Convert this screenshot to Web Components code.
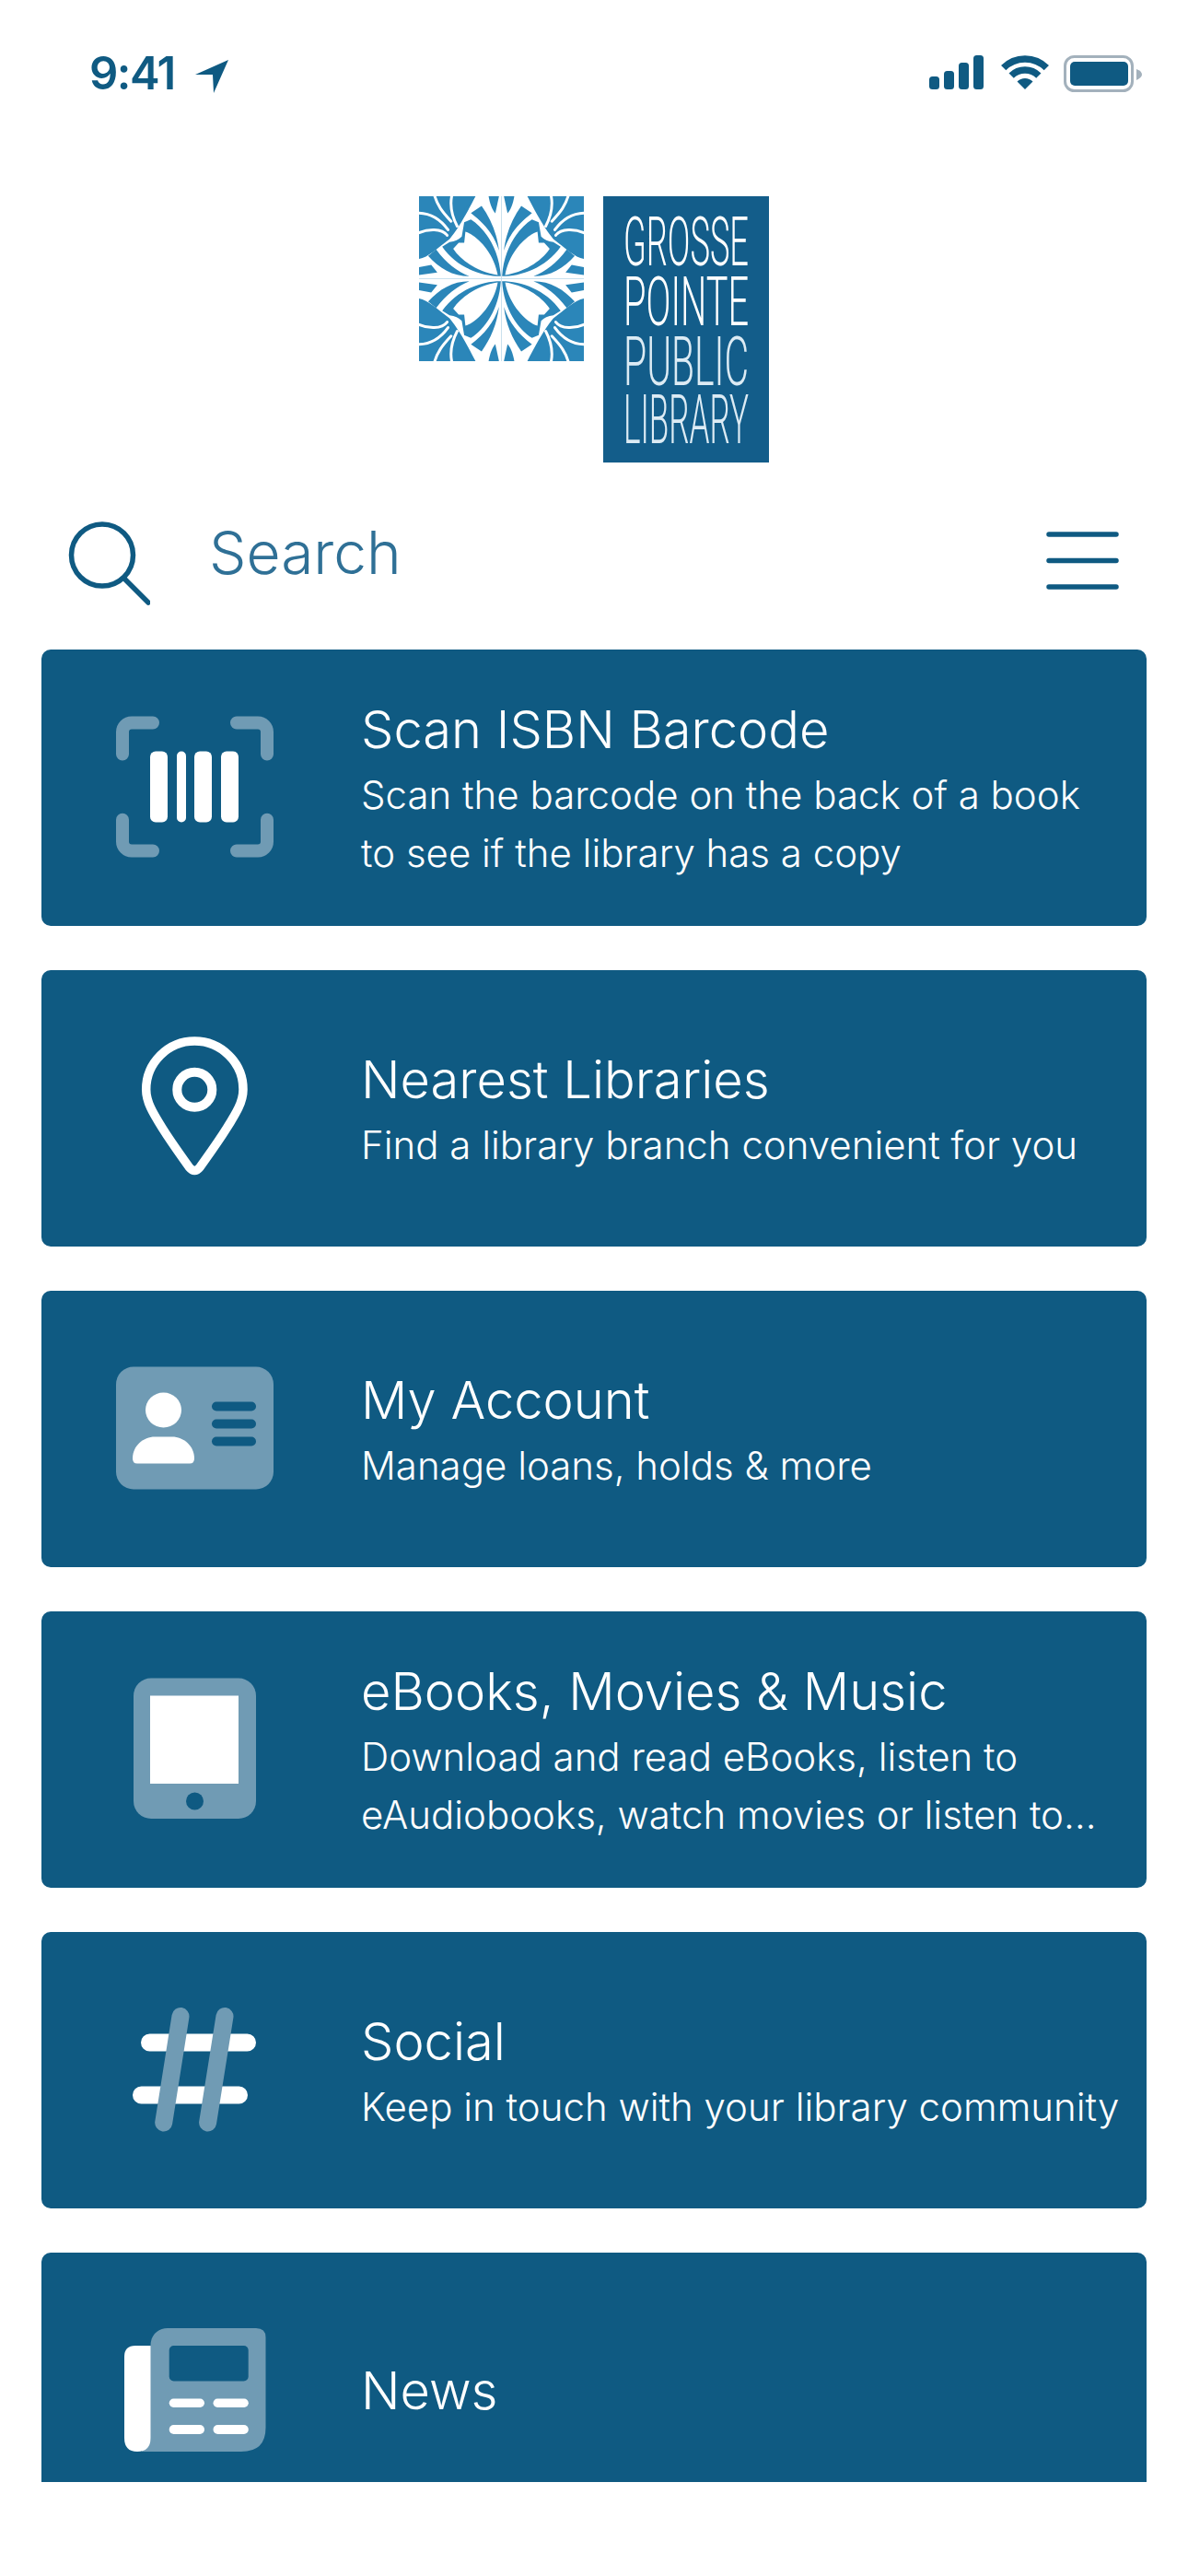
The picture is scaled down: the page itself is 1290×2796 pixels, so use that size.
<!doctype html>
<html><head><meta charset="utf-8"><style>
html,body{margin:0;padding:0;background:#fff}
body{width:1290px;height:2796px;overflow:hidden;font-family:"Inter","Liberation Sans",sans-serif}
app-page{display:block}
</style></head><body>
<app-page>
<status-bar></status-bar>
<app-logo></app-logo>
<search-bar></search-bar>
<menu-list>
<menu-card><app-icon slot="icon" name="barcode"></app-icon><span slot="title">Scan ISBN Barcode</span>Scan the barcode on the back of a book<br>to see if the library has a copy</menu-card>
<menu-card><app-icon slot="icon" name="pin"></app-icon><span slot="title">Nearest Libraries</span>Find a library branch convenient for you</menu-card>
<menu-card><app-icon slot="icon" name="account"></app-icon><span slot="title">My Account</span>Manage loans, holds &amp; more</menu-card>
<menu-card><app-icon slot="icon" name="tablet"></app-icon><span slot="title">eBooks, Movies &amp; Music</span>Download and read eBooks, listen to<br>eAudiobooks, watch movies or listen to…</menu-card>
<menu-card><app-icon slot="icon" name="hash"></app-icon><span slot="title">Social</span>Keep in touch with your library community</menu-card>
<menu-card><app-icon slot="icon" name="news"></app-icon><span slot="title">News</span></menu-card>
</menu-list>
</app-page>
<script>
const L='#709bb4',W='#fff',D='#0f5a82';
const ICONS={
barcode:`<g fill="none" stroke="${L}" stroke-width="14" stroke-linecap="round"><path d="M40 14.5H17a10 10 0 0 0-10 10V48.5"/><path d="M131 14.5H154a10 10 0 0 1 10 10V48.5"/><path d="M7 119.8V143.5a10 10 0 0 0 10 10H40"/><path d="M164 119.8V143.5a10 10 0 0 1-10 10H131"/></g><g fill="${W}"><rect x="37" y="45.5" width="19" height="77" rx="6"/><rect x="66" y="45.5" width="10" height="77" rx="5"/><rect x="85" y="45.5" width="19" height="77" rx="6"/><rect x="114" y="45.5" width="19" height="77" rx="6"/></g>`,
pin:`<path fill="none" stroke="${W}" stroke-width="9.5" stroke-linejoin="round" d="M85.3 12C56.5 12 32.7 35.5 32.7 64.4C32.7 78 40 90 50 106C60 122 71 137 79.5 149Q85.3 156 91 149C99.5 137 110.5 122 120.5 106C130.6 90 138 78 138 64.4C138 35.5 114 12 85.3 12Z"/><circle cx="85.3" cy="64.8" r="19" fill="none" stroke="${W}" stroke-width="10"/>`,
account:`<rect x="0" y="17.5" width="171" height="133" rx="19" fill="${L}"/><ellipse cx="51.5" cy="64.5" rx="19.5" ry="19" fill="${W}"/><path fill="${W}" d="M18 117C18 103 30 93.5 42 93.5H61C73 93.5 85 103 85 117Q85 122.5 80 122.5H23Q18 122.5 18 117Z"/><g fill="${D}"><rect x="104" y="55.5" width="48" height="10" rx="5"/><rect x="104" y="74.5" width="48" height="10" rx="5"/><rect x="104" y="93.5" width="48" height="10" rx="5"/></g>`,
tablet:`<rect x="19" y="7.5" width="133" height="152.5" rx="19" fill="${L}"/><rect x="37" y="26.5" width="96" height="95.5" fill="${W}"/><circle cx="85.5" cy="141" r="9.5" fill="${D}"/>`,
hash:`<g stroke-linecap="round" stroke-width="19" fill="none"><path stroke="${W}" d="M36.5 55H142.5M27.5 112H133.5"/><path stroke="${L}" d="M70 26.5L51.7 142M118 26.5L99.6 142"/></g>`,
news:`<path fill="${L}" d="M37.5 36C37.5 24 46 17 56 17H152Q162.5 17 162.5 27V125Q162.5 151 136 151H28V60Z"/><path fill="${W}" d="M37.5 36V136Q37.5 151 23 151Q9 151 9 136V48Q9 36 21 36Z"/><rect x="57.7" y="36" width="86" height="38.5" rx="5" fill="${D}"/><g fill="${W}"><rect x="57.7" y="93.5" width="38.3" height="9.5" rx="4.7"/><rect x="105.5" y="93.5" width="38.3" height="9.5" rx="4.7"/><rect x="57.7" y="122" width="38.3" height="10" rx="5"/><rect x="105.5" y="122" width="38.3" height="10" rx="5"/></g>`};
class AppIcon extends HTMLElement{connectedCallback(){if(this.shadowRoot)return;
 this.attachShadow({mode:'open'}).innerHTML=`<style>:host{display:block;width:171px;height:171px}svg{display:block}</style><svg width="171" height="171" viewBox="0 0 171 171">${ICONS[this.getAttribute('name')]}</svg>`}}
class StatusBar extends HTMLElement{constructor(){super();this.attachShadow({mode:'open'}).innerHTML=`<style>
:host{display:flex;height:213px;box-sizing:border-box;padding:54px 50px 0 97px;justify-content:space-between;align-items:flex-start;color:${D}}
.l{display:flex;align-items:flex-start;gap:9px}
.t{font:600 49px/52px "Inter","Liberation Sans",sans-serif;letter-spacing:-1.5px;width:106px;white-space:nowrap}
.r{display:flex;align-items:flex-start;margin-top:6px}
svg{display:block}
</style>
<div class="l"><span class="t">9:41</span><svg style="margin-top:10px" width="37" height="38" viewBox="0 0 37 38"><path fill="${D}" d="M36 1L0 17H19L20 37Z"/></svg></div>
<div class="r">
<svg width="59" height="38" viewBox="0 0 59 38" style="margin-right:19px"><g fill="${D}"><rect x="0" y="23" width="11" height="14" rx="3.5"/><rect x="16" y="17" width="11" height="20" rx="3.5"/><rect x="36" y="8" width="11" height="29" rx="3.5" transform="translate(-4 0)"/><rect x="48" y="0" width="11" height="37" rx="3.5"/></g></svg>
<svg width="52" height="38" viewBox="0 0 52 38" style="margin-right:16px"><g fill="none" stroke="${D}" stroke-width="7.5"><path d="M2.67 13.67A33 33 0 0 1 49.33 13.67"/><path d="M11.15 22.15A21 21 0 0 1 40.85 22.15"/></g><path fill="${D}" d="M26 37L17.5 28.5A12 12 0 0 1 34.5 28.5Z"/></svg>
<svg width="85" height="40" viewBox="0 0 85 40"><rect x="1.5" y="1.5" width="73" height="37" rx="10" fill="none" stroke="#a3b1bc" stroke-width="3"/><rect x="7" y="7" width="63" height="26" rx="5" fill="${D}"/><path fill="#a3b1bc" d="M79 15Q85 17 85 21Q85 24 79 27Z"/></svg>
</div>`}}
const quad=`
<path fill="#fff" d="M270 270H0V205C30 200 60 170 100 140C130 105 165 40 185 0H270Z"/>
<g fill="none" stroke="#fff" stroke-width="9" stroke-linecap="round"><path d="M50 -5C60 30 75 50 105 82"/><path d="M108 -5C100 30 105 60 125 98"/><path d="M-5 55C40 55 70 75 95 110"/><path d="M-5 122C30 105 75 105 92 128"/></g>
<path fill="#fff" d="M0 118C40 105 70 108 90 125L78 136C50 125 25 130 0 142Z" opacity="0"/>
<path fill="#2b86b9" d="M118 0H185L152 36L128 88C115 60 110 30 118 0Z"/>
<path fill="#2b86b9" d="M228 0H262L250 56C240 45 232 25 228 0Z"/>
<path fill="#2b86b9" d="M0 232L40 225L60 250L0 258Z"/>
<path fill="#2b86b9" d="M170 55L205 32C235 75 255 120 262 178C245 125 215 90 170 55Z"/>
<path fill="#2b86b9" d="M30 195L56 174C90 220 125 245 165 262C110 262 65 235 30 195Z"/>
<path fill="#2b86b9" d="M148 85L170 76C215 105 262 170 268 262C205 262 125 235 76 165L100 150C118 148 130 142 140 132Z"/>
<path fill="#fff" d="M258 258C200 250 140 215 112 172L130 152L148 152L152 116C190 128 245 185 258 258Z"/>`;
const orn=['','translate(540 0) scale(-1 1)','translate(0 540) scale(1 -1)','translate(540 540) scale(-1 -1)'].map(t=>`<g transform="${t}">${quad}</g>`).join('');
class AppLogo extends HTMLElement{constructor(){super();this.attachShadow({mode:'open'}).innerHTML=`<style>
:host{display:flex;justify-content:center;gap:21px;height:289px;align-items:flex-start}
svg{display:block}
text{font-family:"Roboto","Liberation Sans",sans-serif;font-weight:300;font-size:74px;fill:#fff}
.lt{fill:#dcebf4}
</style>
<svg width="179" height="179" viewBox="0 0 540 540"><rect width="540" height="540" fill="#2b86b9"/>${orn}</svg>
<svg width="180" height="289" viewBox="0 0 180 289"><rect width="180" height="289" fill="#135d8a"/>
<text x="22" y="75" textLength="136" lengthAdjust="spacingAndGlyphs">GROSSE</text>
<text x="22" y="140" textLength="136" lengthAdjust="spacingAndGlyphs">POINTE</text>
<text class="lt" x="22" y="205" textLength="136" lengthAdjust="spacingAndGlyphs">PUBLIC</text>
<text class="lt" x="22" y="268" textLength="136" lengthAdjust="spacingAndGlyphs">LIBRARY</text></svg>`}}
class SearchBar extends HTMLElement{constructor(){super();this.attachShadow({mode:'open'}).innerHTML=`<style>
:host{display:flex;align-items:flex-start;height:203px;padding:62px 75px 0 73px;box-sizing:border-box}
svg{display:block}
.s{font:300 64px/76px "Inter","Liberation Sans",sans-serif;color:#2f7096;margin-left:64px;margin-top:-2px;flex:1}
</style>
<svg width="90" height="94" viewBox="0 0 90 94"><circle cx="38" cy="38.5" r="33.5" fill="none" stroke="${D}" stroke-width="5.5"/><path d="M63 65L88 90" stroke="${D}" stroke-width="5.5" stroke-linecap="round"/></svg>
<span class="s">Search</span>
<svg style="margin-top:13px" width="79" height="64" viewBox="0 0 79 64"><g stroke="${D}" stroke-width="5.5" stroke-linecap="round"><path d="M3 3H76M3 31.5H76M3 60H76"/></g></svg>`}}
class MenuList extends HTMLElement{constructor(){super();this.attachShadow({mode:'open'}).innerHTML=`<style>
:host{display:flex;flex-direction:column;gap:48px;height:1989px;overflow:hidden;padding:0 45px}
</style><slot></slot>`}}
class MenuCard extends HTMLElement{constructor(){super();this.attachShadow({mode:'open'}).innerHTML=`<style>
:host{display:flex;flex:none;align-items:center;height:300px;box-sizing:border-box;padding-left:81px;background:${D};border-radius:10px;color:#fff}
.txt{margin-left:95px;font:300 42px/63px "Inter","Liberation Sans",sans-serif;white-space:nowrap}
.h{font-size:56px;line-height:78px;display:block}
::slotted(app-icon){flex:none}
</style><slot name="icon"></slot><div class="txt"><div class="h"><slot name="title"></slot></div><slot></slot></div>`}}
customElements.define('app-icon',AppIcon);customElements.define('status-bar',StatusBar);customElements.define('app-logo',AppLogo);customElements.define('search-bar',SearchBar);customElements.define('menu-list',MenuList);customElements.define('menu-card',MenuCard);
customElements.define('app-page',class extends HTMLElement{constructor(){super();this.attachShadow({mode:'open'}).innerHTML='<style>:host{display:block}</style><slot></slot>'}});
</script></body></html>
